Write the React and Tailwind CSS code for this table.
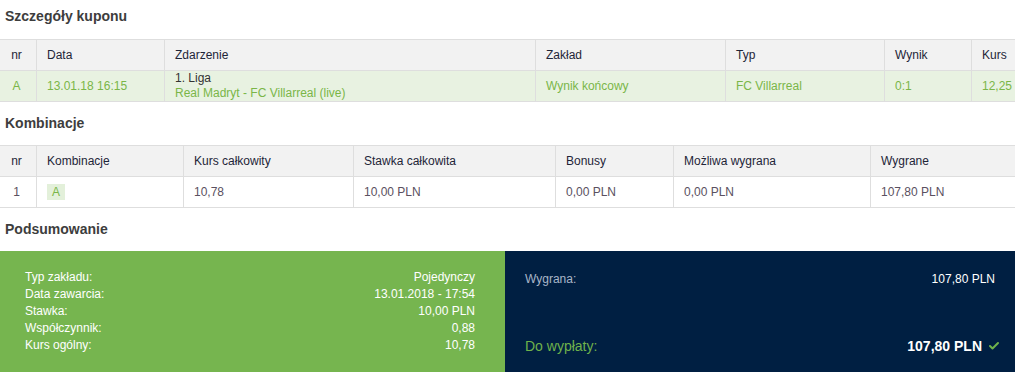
import { Check } from 'lucide-react';

const font = { fontFamily: '"Liberation Sans", Arial, sans-serif' };

const betCols = 'grid grid-cols-[36px_128px_371px_190px_159px_87px_1fr]';
const comboCols = 'grid grid-cols-[36px_147px_170px_202px_118px_197px_1fr]';

function SectionTitle({ children, first }) {
  return (
    <div
      className={`px-[5px] text-[14px] font-bold leading-[20px] text-[#3d3d3d] ${
        first ? 'h-[39px] pt-[6px]' : 'h-[43px] pt-[11px]'
      }`}
    >
      {children}
    </div>
  );
}

function HeadCell({ children, first }) {
  return (
    <div
      className={`flex items-center border-l border-[#dedede] first:border-l-0 ${
        first ? 'justify-center pr-[3px]' : 'pl-[10px]'
      }`}
    >
      {children}
    </div>
  );
}

function App() {
  const betHeads = ['nr', 'Data', 'Zdarzenie', 'Zakład', 'Typ', 'Wynik', 'Kurs'];
  const comboHeads = ['nr', 'Kombinacje', 'Kurs całkowity', 'Stawka całkowita', 'Bonusy', 'Możliwa wygrana', 'Wygrane'];

  const summary = [
    ['Typ zakładu:', 'Pojedynczy'],
    ['Data zawarcia:', '13.01.2018 - 17:54'],
    ['Stawka:', '10,00 PLN'],
    ['Współczynnik:', '0,88'],
    ['Kurs ogólny:', '10,78'],
  ];

  return (
    <div className="w-[1015px] h-[376px] overflow-hidden bg-white text-[12px]" style={font}>
      <SectionTitle first>Szczegóły kuponu</SectionTitle>

      {/* bet details */}
      <div className="border-t border-[#dedede]">
        <div className={`${betCols} h-[31px] bg-[#f2f2f2] border-b border-[#dedede] text-[#1e2538]`}>
          {betHeads.map((h, i) => (
            <HeadCell key={h} first={i === 0}>{h}</HeadCell>
          ))}
        </div>
        <div className={`${betCols} h-[31px] bg-[#e8f2e1] border-b border-[#dedede] text-[#7ab648]`}>
          <HeadCell first>A</HeadCell>
          <HeadCell>13.01.18 16:15</HeadCell>
          <div className="flex flex-col justify-center border-l border-[#dedede] pl-[10px] leading-[15px]">
            <span className="text-[#333]">1. Liga</span>
            <span>Real Madryt - FC Villarreal (live)</span>
          </div>
          <HeadCell>Wynik końcowy</HeadCell>
          <HeadCell>FC Villarreal</HeadCell>
          <HeadCell>0:1</HeadCell>
          <HeadCell>12,25</HeadCell>
        </div>
      </div>

      <SectionTitle>Kombinacje</SectionTitle>

      {/* combinations */}
      <div className="border-t border-[#dedede]">
        <div className={`${comboCols} h-[31px] bg-[#f2f2f2] border-b border-[#dedede] text-[#1e2538]`}>
          {comboHeads.map((h, i) => (
            <HeadCell key={h} first={i === 0}>{h}</HeadCell>
          ))}
        </div>
        <div className={`${comboCols} h-[31px] border-b border-[#dedede] text-[#5a5060]`}>
          <HeadCell first>1</HeadCell>
          <HeadCell>
            <span className="flex h-[16px] w-[18px] items-center justify-center bg-[#e3f0da] text-[#7ab648]">A</span>
          </HeadCell>
          <HeadCell>10,78</HeadCell>
          <HeadCell>10,00 PLN</HeadCell>
          <HeadCell>0,00 PLN</HeadCell>
          <HeadCell>0,00 PLN</HeadCell>
          <HeadCell>107,80 PLN</HeadCell>
        </div>
      </div>

      <SectionTitle>Podsumowanie</SectionTitle>

      {/* summary */}
      <div className="flex h-[121px]">
        <div className="flex w-[505px] flex-col justify-center bg-[#76b54f] pl-[25px] pr-[30px] text-white leading-[17px]">
          {summary.map(([k, v]) => (
            <div key={k} className="flex justify-between">
              <span>{k}</span>
              <span>{v}</span>
            </div>
          ))}
        </div>
        <div className="flex flex-1 flex-col justify-between bg-[#001f42] pl-[20px] pr-[15px] pt-[20px] pb-[17px]">
          <div className="flex justify-between pr-[5px] leading-[16px]">
            <span className="text-[#a9b6c8]">Wygrana:</span>
            <span className="text-white">107,80 PLN</span>
          </div>
          <div className="flex items-center justify-between text-[14px] leading-[18px]">
            <span className="text-[#6fb24b]">Do wypłaty:</span>
            <span className="flex items-center gap-[6px] font-bold text-white">
              107,80 PLN
              <Check size={12} strokeWidth={4} className="text-[#6fb24b]" />
            </span>
          </div>
        </div>
      </div>
    </div>
  );
}

export default App;
